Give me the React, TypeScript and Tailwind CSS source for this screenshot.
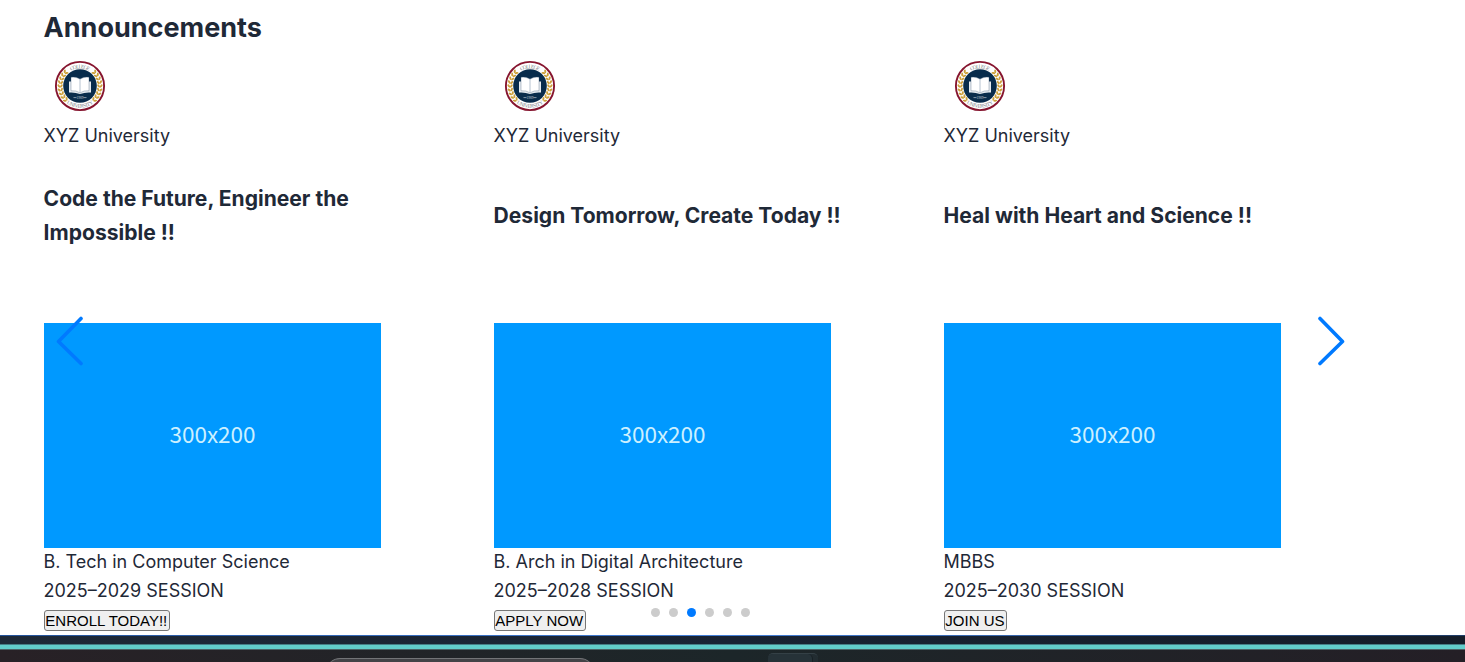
type Announcement = { title: string; course: string; session: string; action: string };

const announcements: Announcement[] = [
  {
    title: 'Code the Future, Engineer the Impossible !!',
    course: 'B. Tech in Computer Science',
    session: '2025–2029 SESSION',
    action: 'ENROLL TODAY!!',
  },
  {
    title: 'Design Tomorrow, Create Today !!',
    course: 'B. Arch in Digital Architecture',
    session: '2025–2028 SESSION',
    action: 'APPLY NOW',
  },
  {
    title: 'Heal with Heart and Science !!',
    course: 'MBBS',
    session: '2025–2030 SESSION',
    action: 'JOIN US',
  },
];

// Laurel leaves placed along an arc, mirrored for the right-hand branch
const leaves = [-44, -33, -22, -11, 0, 11, 22, 33, 44].flatMap((deg) => {
  const a = (deg * Math.PI) / 180;
  return [18.6, 21.2].map((r, i) => ({
    x: -r * Math.cos(a),
    y: r * Math.sin(a),
    rot: -deg + (i === 0 ? 35 : -35),
  }));
});

function Branch() {
  return (
    <g fill="#cda03a">
      {leaves.map((l, i) => (
        <ellipse key={i} rx="1" ry="1.9" transform={`translate(${l.x} ${l.y}) rotate(${l.rot})`} />
      ))}
    </g>
  );
}

function Seal({ id }: { id: string }) {
  return (
    <svg className="block size-[72px]" viewBox="-36 -36 72 72">
      <circle r="24.1" fill="#fff" stroke="#86152f" strokeWidth="1.9" />
      <Branch />
      <g transform="scale(-1 1)">
        <Branch />
      </g>
      <circle r="16.8" fill="#082c4c" />
      <path d="M-11-4.500v11q6-.5 11 1.500q5-2 11-1.500v-11z" fill="#e6ebf0" />
      <path d="M0-7q-4-2.500-9-1.800V4.800q5-.6 9 2q4-2.600 9-2V-8.800q-5-.7-9 1.800z" fill="#fff" stroke="#45607c" strokeWidth=".35" />
      <path d="M0-7V6.500" stroke="#a3b3c4" strokeWidth=".8" />
      <path d="M-6.500 11.600h3M3.500 11.600h3" stroke="#b9c4cf" strokeWidth=".7" />
      <defs>
        <path id={`${id}-top`} d="M-17.700 0A17.700 17.700 0 0 1 17.700 0" />
        <path id={`${id}-bottom`} d="M-21.800 0A21.800 21.800 0 0 0 21.800 0" />
      </defs>
      <g className="font-['Liberation_Serif',serif]" textAnchor="middle" fill="#7d8188">
        <text fontSize="3.4" y="12.800" fill="#cbd3dc">1989</text>
        <text fontSize="5.4">
          <textPath href={`#${id}-top`} startOffset="50%" textLength="19">COLLEGE</textPath>
        </text>
        <text fontSize="5.4">
          <textPath href={`#${id}-bottom`} startOffset="50%" textLength="29">UNIVERSITY</textPath>
        </text>
      </g>
    </svg>
  );
}

function Slide({ item, index }: { item: Announcement; index: number }) {
  return (
    <article className="flex w-[450px] shrink-0 flex-col items-start">
      <Seal id={`seal-${index}`} />
      <p className="-ml-[0.5px]">XYZ University</p>
      <h3 className="-ml-[0.4px] flex h-[130px] w-[360px] items-center text-[21.06px] leading-[33.7px] font-bold">
        {item.title}
      </h3>
      <div className="mt-[42.200px] flex h-[225px] w-[337px] items-center justify-center bg-[#0099ff] pb-[5px] font-['Noto_Sans_CJK_SC',sans-serif] text-[22.5px] leading-none text-[#ccf0ff]">
        300x200
      </div>
      <p className="-ml-[0.5px]">{item.course}</p>
      <p className="-ml-[0.5px]">{item.session}</p>
      <button className="mt-[4.400px] h-[21px] rounded-[3px] border border-[#767676] bg-[#efefef] pr-[1.500px] pl-[0.300px] font-['Liberation_Sans',Arial,sans-serif] text-[15px] leading-[19px] whitespace-nowrap text-black">
        {item.action}
      </button>
    </article>
  );
}

function Arrow({ flip = false }: { flip?: boolean }) {
  return (
    <svg
      className={flip ? 'absolute top-[266px] left-[12px] h-[50px] w-[28px] -scale-x-100' : 'absolute top-[266px] left-[1273px] h-[50px] w-[28px]'}
      viewBox="0 0 28 50"
      fill="none"
      stroke="#007aff"
      strokeWidth="3.600"
      strokeLinecap="round"
      strokeLinejoin="round"
    >
      <path d="M3 2.500L25.500 25.500L3 47.500" />
    </svg>
  );
}

export default function App() {
  return (
    <main className="flex h-[662px] w-[1465px] flex-col overflow-hidden bg-white font-['Inter',sans-serif] text-[18px] leading-[28.800px] text-[#1f2937]">
      <section className="h-[635px] pl-[44px]">
        <h2 className="-ml-[0.4px] flex h-[50px] items-center pt-[5px] text-[27px] leading-[45px] font-bold">Announcements</h2>
        <div className="relative h-[585px]">
          <div className="flex">
            {announcements.map((item, i) => (
              <Slide key={item.action} item={item} index={i} />
            ))}
          </div>
          <Arrow flip />
          <Arrow />
          <div className="absolute top-[558px] left-[607px] flex gap-[9px]">
            {[0, 1, 2, 3, 4, 5].map((n) => (
              <span key={n} className={n === 2 ? 'size-[9px] rounded-full bg-[#007aff]' : 'size-[9px] rounded-full bg-[#cccccc]'} />
            ))}
          </div>
        </div>
      </section>
      <footer className="flex h-[27px] flex-col">
        <div className="h-px bg-linear-to-r from-[#24539a] via-[#4580d8] to-[#203d68]" />
        <div className="h-2 bg-linear-to-r from-[#1e2937] via-[#192333] to-[#151d29]" />
        <div className="h-[4px] border-t border-[#467f86] bg-[#62cdcb]" />
        <div className="h-px bg-[#62cdcb]" />
        <div className="flex h-[13px] border-t border-[#4b6266] bg-linear-to-r from-[#282126] via-[#1c2629] to-[#241f26]">
          <div className="mt-[8px] ml-[326px] h-6 w-[268px] rounded-t-[14px] border-t border-[#737477] bg-[#434347]" />
          <div className="mt-[3px] ml-[174px] h-6 w-[50px] rounded-t-[5px] border-t border-[#344046] bg-[#222c31]">
            <div className="h-6 w-[45px] rounded-t-[5px] border-r border-[#182025] bg-[#263238]" />
          </div>
        </div>
      </footer>
    </main>
  );
}
